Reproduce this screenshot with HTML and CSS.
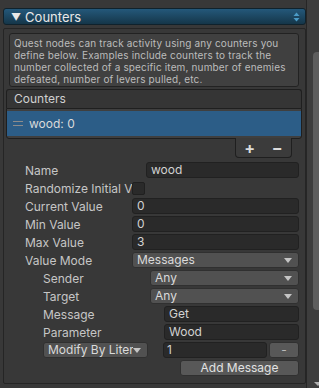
FILE: index.html
```html
<!DOCTYPE html>
<html lang="en">
<head>
  <meta charset="UTF-8">
  <meta name="viewport" content="width=device-width, initial-scale=1.0">
  <title>Counters</title>
  <link rel="stylesheet" href="styles.css">
</head>
<body>
  <div class="inspector">
    <div class="main">
      <div class="foldout">
        <span class="fold-arrow">&#9660;</span>
        <span class="fold-title">Counters</span>
        <svg class="updown" width="7" height="10" viewBox="0 0 7 10">
          <path d="M0.5 4 L3.5 0.5 L6.5 4 Z" fill="#4b9bc6"/>
          <path d="M0.5 6 L3.5 9.5 L6.5 6 Z" fill="#4b9bc6"/>
        </svg>
      </div>

      <div class="box">
        <div class="helpbox">
          Quest nodes can track activity using any counters you define below. Examples include counters to track the number collected of a specific item, number of enemies defeated, number of levers pulled, etc.
        </div>

        <div class="list">
          <div class="list-header">Counters</div>
          <div class="list-body">
            <div class="list-row selected">
              <span class="handle"></span>
              <span class="row-text">wood: 0</span>
            </div>
          </div>
          <div class="list-footer">
            <span class="plus">+</span>
            <span class="minus">&minus;</span>
          </div>
        </div>

        <div class="fields">
          <div class="row">
            <span class="label">Name</span>
            <div class="input shift">wood</div>
          </div>
          <div class="row">
            <span class="label">Randomize Initial Value</span>
            <div class="checkbox"></div>
          </div>
          <div class="row">
            <span class="label">Current Value</span>
            <div class="input">0</div>
          </div>
          <div class="row">
            <span class="label">Min Value</span>
            <div class="input">0</div>
          </div>
          <div class="row">
            <span class="label">Max Value</span>
            <div class="input">3</div>
          </div>
          <div class="row">
            <span class="label">Value Mode</span>
            <div class="dropdown">Messages</div>
          </div>
          <div class="row sub">
            <span class="label">Sender</span>
            <div class="dropdown">Any</div>
          </div>
          <div class="row sub">
            <span class="label">Target</span>
            <div class="dropdown">Any</div>
          </div>
          <div class="row sub">
            <span class="label">Message</span>
            <div class="input shift">Get</div>
          </div>
          <div class="row sub">
            <span class="label">Parameter</span>
            <div class="input shift">Wood</div>
          </div>
          <div class="row sub">
            <div class="dropdown modify"><span class="clip">Modify By Literal</span></div>
            <div class="input literal">1</div>
            <div class="button small">-</div>
          </div>
          <div class="row end">
            <div class="button add">Add Message</div>
          </div>
        </div>
      </div>
    </div>

    <div class="scrollbar">
      <div class="thumb"></div>
      <span class="scroll-down"></span>
    </div>
  </div>
</body>
</html>
```

FILE: styles.css
```css
body {
  margin: 0;
  background: #383838;
  font-family: Inter, "Noto Sans", sans-serif;
  font-size: 12px;
  color: #c8c8c8;
  overflow: hidden;
}
.inspector {
  display: flex;
  height: 388px;
}
.main {
  width: 306px;
  padding: 8px 0 0 3px;
  box-sizing: border-box;
}

/* foldout header */
.foldout {
  position: relative;
  display: flex;
  align-items: center;
  height: 17px;
  background: linear-gradient(#24587a, #153649);
  border: 1px solid #10222c;
  border-radius: 3px;
  box-sizing: border-box;
  color: #e8e8e8;
  font-size: 13px;
}
.fold-arrow {
  font-size: 10px;
  margin: 0 4px 0 7px;
}
.updown {
  position: absolute;
  right: 5px;
  top: 3px;
}

/* outer box */
.box {
  margin-top: 3px;
  height: 356px;
  border: 1px solid #252525;
  border-radius: 2px;
  box-sizing: border-box;
  padding: 4px 6px 0 0;
}
.helpbox {
  margin-left: 5px;
  height: 54px;
  box-sizing: border-box;
  padding: 3px 4px 0 4px;
  background: #404040;
  border: 1px solid #222;
  border-radius: 3px;
  font-size: 10px;
  line-height: 12px;
  letter-spacing: 0.15px;
  color: #bcbcbc;
}

/* reorderable list */
.list {
  display: flex;
  flex-direction: column;
  margin: 2px -3px 0 2px;
}
.list-header {
  height: 19px;
  line-height: 18px;
  padding-left: 7px;
  background: #353535;
  border: 1px solid #1f1f1f;
  border-bottom: none;
  border-radius: 3px 3px 0 0;
  box-sizing: border-box;
  color: #d0d0d0;
}
.list-body {
  border: 1px solid #1f1f1f;
  border-radius: 0 0 3px 3px;
  background: #3f3f3f;
  padding: 2px 0;
}
.list-row {
  display: flex;
  align-items: center;
  height: 25px;
}
.list-row.selected {
  background: #2c5d87;
}
.handle {
  width: 10px;
  height: 3px;
  margin: 0 6px;
  border-top: 1px solid #8c8c8c;
  border-bottom: 1px solid #8c8c8c;
}
.row-text {
  color: #dadada;
}
.list-footer {
  align-self: flex-end;
  display: flex;
  justify-content: space-around;
  align-items: center;
  width: 57px;
  height: 20px;
  margin-right: 10px;
  margin-top: -1px;
  box-sizing: border-box;
  background: #3b3b3b;
  border: 1px solid #1f1f1f;
  border-top: none;
  border-radius: 0 0 4px 4px;
  color: #dcdcdc;
  font-size: 16px;
  font-weight: bold;
}

/* property rows */
.fields {
  margin-top: 3px;
  padding-left: 21px;
}
.row {
  display: flex;
  align-items: center;
  height: 18px;
}
.row.sub {
  padding-left: 18px;
}
.row.end {
  justify-content: flex-end;
}
.label {
  width: 107px;
  flex: none;
  white-space: nowrap;
  overflow: hidden;
  color: #c6c6c6;
}
.input, .dropdown, .button {
  flex: 1;
  height: 16px;
  line-height: 14px;
  box-sizing: border-box;
  border-radius: 3px;
  padding: 0 4px;
  white-space: nowrap;
  overflow: hidden;
}
.input {
  background: #2a2a2a;
  border: 1px solid #212121;
  color: #d2d2d2;
}
.input.shift {
  margin-left: 14px;
}
.checkbox {
  width: 13px;
  height: 13px;
  box-sizing: border-box;
  background: #2a2a2a;
  border: 1px solid #202020;
  border-radius: 2px;
}
.dropdown {
  position: relative;
  background: #515151;
  border: 1px solid #303030;
  color: #dadada;
  padding-right: 16px;
}
.dropdown::after {
  content: "";
  position: absolute;
  right: 6px;
  top: 5px;
  border-left: 4px solid transparent;
  border-right: 4px solid transparent;
  border-top: 5px solid #c4c4c4;
}
.dropdown.modify {
  flex: none;
  width: 105px;
  padding-right: 14px;
}
.clip {
  display: block;
  overflow: hidden;
  white-space: nowrap;
}
.input.literal {
  margin-left: 15px;
  padding-left: 3px;
}
.button {
  background: #585858;
  border: 1px solid #303030;
  color: #e2e2e2;
  text-align: center;
}
.button.small {
  flex: none;
  width: 30px;
  margin-left: 2px;
  color: #bbbbbb;
}
.button.add {
  flex: none;
  width: 119px;
}

/* scrollbar */
.scrollbar {
  position: relative;
  flex: 1;
  border-left: 1px solid #262626;
  background: #3d3d3d;
}
.thumb {
  position: absolute;
  left: 6px;
  top: 52px;
  width: 9px;
  height: 258px;
  background: #5d5d5d;
  border-radius: 4px;
}
.scroll-down {
  position: absolute;
  left: 7px;
  top: 382px;
  border-left: 4px solid transparent;
  border-right: 4px solid transparent;
  border-top: 4px solid #b0b0b0;
}
```
